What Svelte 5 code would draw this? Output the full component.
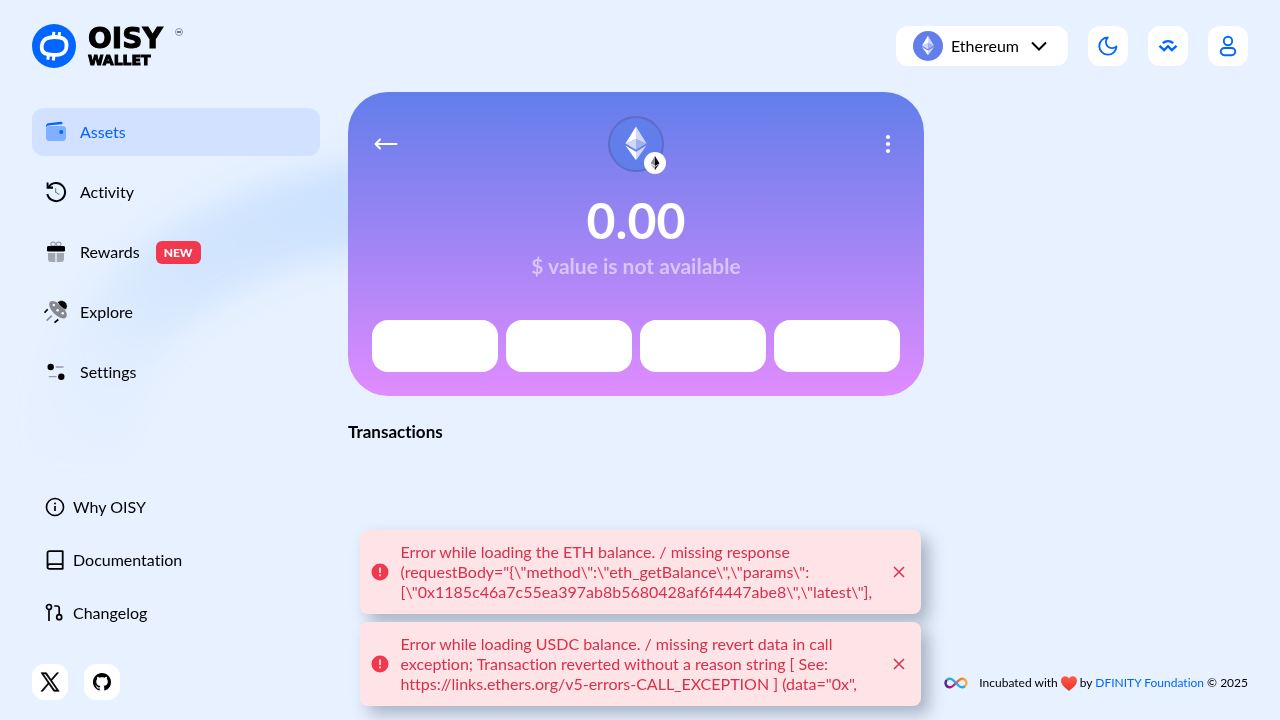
<script lang="ts">
  const nav = [
    { id: 'assets', label: 'Assets' },
    { id: 'activity', label: 'Activity' },
    { id: 'rewards', label: 'Rewards', badge: 'NEW' },
    { id: 'explore', label: 'Explore' },
    { id: 'settings', label: 'Settings' }
  ];

  const links = [
    { id: 'info', label: 'Why OISY' },
    { id: 'docs', label: 'Documentation' },
    { id: 'changelog', label: 'Changelog' }
  ];

  const actions = ['Receive', 'Send', 'Convert', 'Buy'];

  let toasts = $state([
    {
      id: 1,
      text: 'Error while loading the ETH balance. / missing response\n(requestBody="{\\"method\\":\\"eth_getBalance\\",\\"params\\":\n[\\"0x1185c46a7c55ea397ab8b5680428af6f4447abe8\\",\\"latest\\"],'
    },
    {
      id: 2,
      text: 'Error while loading USDC balance. / missing revert data in call\nexception; Transaction reverted without a reason string [ See:\nhttps://links.ethers.org/v5-errors-CALL_EXCEPTION ] (data="0x",'
    }
  ]);

  function dismiss(id: number) {
    toasts = toasts.filter((t) => t.id !== id);
  }
</script>

{#snippet ether()}
  <svg viewBox="-2 -2 37 37" aria-hidden="true">
    <path fill="#fff" fill-opacity=".7" d="M16.5 4v8.9l7.5 3.3z" />
    <path fill="#fff" d="M16.5 4 9 16.2l7.5-3.3z" />
    <path fill="#fff" fill-opacity=".7" d="M16.5 22v6L24 17.6z" />
    <path fill="#fff" d="M16.5 28v-6L9 17.6z" />
    <path fill="#fff" fill-opacity=".4" d="m16.5 20.6 7.5-4.4-7.5-3.3z" />
    <path fill="#fff" fill-opacity=".7" d="m9 16.2 7.5 4.4v-7.7z" />
  </svg>
{/snippet}

{#snippet icon(id: string)}
  <svg class="icon" width="24" height="24" viewBox="0 0 24 24" fill="none" aria-hidden="true">
    {#if id === 'assets'}
      <path fill="#0066ff" d="M2 7.4V6c0-1.500 1-2.600 2.400-2.800l12.300-1.500c.9-.1 1.500.4 1.700 1.200.2.8-.2 1.300-.8 1.400L5.600 5.300C4 5.400 3 6 2 7.400z" />
      <rect x="2" y="6" width="20" height="15" rx="3.400" fill="#80b0ff" />
      <circle cx="17.200" cy="12" r="2" fill="#0066ff" />
    {:else if id === 'activity'}
      <path d="M4.600 7.100A9 9 0 1 1 3.300 14" stroke="#000" stroke-width="2" />
      <path fill="#000" d="M2.600 2.400h1.900v4.200H9v2.100H2.600z" />
      <path d="M11.600 8v4.200l3.800 2.400" stroke="#858a94" stroke-width="1.200" />
    {:else if id === 'rewards'}
      <rect x="6.800" y="2.100" width="4.600" height="4" rx="2" stroke="#989da8" stroke-width="1.100" />
      <rect x="12.400" y="2.100" width="4.600" height="4" rx="2" stroke="#989da8" stroke-width="1.100" />
      <path fill="#a2a8b3" d="M4 13h7.300v9H7.200A3.200 3.200 0 0 1 4 18.800zM12.700 13H20v5.800a3.200 3.200 0 0 1-3.200 3.200h-4.100z" />
      <rect x="3" y="6" width="18" height="5.600" rx="1.400" fill="#000" />
    {:else if id === 'explore'}
      <ellipse cx="14" cy="9.700" rx="11.100" ry="5.500" transform="rotate(45 14 9.700)" fill="#858a92" />
      <path fill="#000" stroke="#e5efff" stroke-width=".6" d="M13.600 2.200c2.800-2.700 6.700-1.700 8.500.9 1.500 2.200 1.400 4.500-.1 6.500-3-.6-6.800-3.800-8.400-7.400z" />
      <g fill="#fff">
        <circle cx="9.800" cy="5" r="1.200" />
        <circle cx="13.600" cy="10.300" r="1.300" />
        <circle cx="18.700" cy="13.200" r="1.200" />
      </g>
      <path d="m.5 12.800 3.200-3.600M10.500 22.600l3.800-3.100" stroke="#000" stroke-width="1.700" />
      <path d="m2.600 20.600 5.200-5" stroke="#858a92" stroke-width="1.500" />
    {:else if id === 'settings'}
      <circle cx="6.700" cy="7" r="3.200" fill="#000" />
      <circle cx="17.300" cy="16.700" r="3.200" fill="#000" />
      <path d="M11.700 7H19.500M4.800 16.700h7.700" stroke="#969ba5" stroke-width="1.300" />
    {:else if id === 'info'}
      <circle cx="12" cy="12" r="8.500" stroke="#000" stroke-width="1.600" />
      <path d="M12 11v5" stroke="#000" stroke-width="1.700" />
      <circle cx="12" cy="8.500" r="1" fill="#000" />
    {:else if id === 'docs'}
      <path d="M4.500 19V5.200c0-1.300.7-2 2-2h13.200v17.600H6.500c-1.300 0-2-.6-2-1.800s.7-2.900 2-2.900h13" stroke="#000" stroke-width="1.800" stroke-linejoin="round" />
    {:else if id === 'changelog'}
      <circle cx="6" cy="6" r="2.500" stroke="#000" stroke-width="1.700" />
      <circle cx="16.200" cy="16.200" r="2.500" stroke="#000" stroke-width="1.700" />
      <path d="M6 8.500v11.500M11.200 5h2.800c1.500 0 2.200.7 2.200 2.200v6.500" stroke="#000" stroke-width="1.700" />
    {/if}
  </svg>
{/snippet}

<svg class="backdrop" viewBox="0 0 1280 720" preserveAspectRatio="xMidYMid slice" aria-hidden="true">
  <defs>
    <filter id="soft" x="-30%" y="-30%" width="160%" height="160%"><feGaussianBlur stdDeviation="15" /></filter>
    <linearGradient id="arc" gradientUnits="userSpaceOnUse" x1="380" y1="190" x2="90" y2="450">
      <stop offset="0" stop-color="#cbe1fe" />
      <stop offset=".55" stop-color="#d4e6fe" />
      <stop offset="1" stop-color="#dfecfe" stop-opacity=".1" />
    </linearGradient>
  </defs>
  <path d="M480 196C300 196 88 262 80 450" fill="none" stroke="url(#arc)" stroke-width="88" filter="url(#soft)" />
</svg>

<div class="page">
  <header>
    <a class="logo" href="#home" aria-label="OISY Wallet">
      <svg width="44" height="44" viewBox="0 0 44 44" aria-hidden="true">
        <circle cx="22" cy="22" r="22" fill="#0066ff" />
        <g stroke="#fff" fill="none">
          <path stroke-width="3.800" d="M16.500 13.800c4.200-1 9-1 13 .1 3.900 1.200 5.400 3.500 5 8.400-.4 4.600-2.200 6.900-6.500 8-4.200.9-8.600.8-12.500-.1-4.400-1-6.200-3.300-5.800-8.100.4-4.900 2.400-7.300 6.800-8.300z" />
          <path stroke-width="3" d="m21.300 13 .6-5.200M26.900 13.500l.7-5.400M16.500 30.500l-.7 5.200M22 31l-.7 5.500" />
        </g>
      </svg>
      <span class="wordmark"><span class="oisy">OISY</span><span class="wallet">WALLET</span></span>
      <svg class="mark" width="8" height="8" viewBox="0 0 8 8" aria-hidden="true">
        <circle cx="4" cy="4" r="3.500" fill="none" stroke="#6c717a" stroke-width=".7" />
        <path d="M2 4h4" stroke="#4a4e55" stroke-width="1.500" />
      </svg>
    </a>
    <div class="tools">
      <button class="network">
        <span class="coin small">{@render ether()}</span>
        Ethereum
        <svg width="24" height="24" viewBox="0 0 24 24" fill="none" aria-hidden="true">
          <path d="m5 8.500 7 7 7-7" stroke="#000" stroke-width="2" />
        </svg>
      </button>
      <button class="tool" aria-label="Dark mode">
        <svg width="24" height="24" viewBox="0 0 24 24" fill="none" aria-hidden="true">
          <path d="M11.700 3.500A8.600 8.600 0 1 0 20.500 12.300 5.900 5.900 0 0 1 11.700 3.500z" stroke="#0066ff" stroke-width="1.800" stroke-linejoin="round" />
        </svg>
      </button>
      <button class="tool" aria-label="WalletConnect">
        <svg width="24" height="24" viewBox="0 0 24 24" fill="none" aria-hidden="true">
          <path d="M6.800 9.100c3.100-2.600 7.300-2.600 10.400 0M3.500 11.800l4.700 4.300 3.800-3.900 3.800 3.900 4.700-4.300" stroke="#0066ff" stroke-width="2.500" />
        </svg>
      </button>
      <button class="tool" aria-label="Account">
        <svg width="24" height="24" viewBox="0 0 24 24" fill="none" stroke="#0066ff" stroke-width="1.900" aria-hidden="true">
          <circle cx="12" cy="7" r="4.200" />
          <rect x="4.700" y="14" width="14.600" height="7.200" rx="3.600" />
        </svg>
      </button>
    </div>
  </header>

  <div class="body">
    <aside>
      <nav class="primary">
        {#each nav as item (item.id)}
          <a href={'#' + item.id} class:active={item.id === 'assets'}>
            {@render icon(item.id)}
            {item.label}
            {#if item.badge}<span class="badge">{item.badge}</span>{/if}
          </a>
        {/each}
      </nav>
      <nav class="secondary">
        {#each links as item (item.id)}
          <a href={'#' + item.id}>{@render icon(item.id)}{item.label}</a>
        {/each}
      </nav>
    </aside>

    <main>
      <section class="hero">
        <div class="top">
          <button class="plain" aria-label="Back">
            <svg width="26" height="24" viewBox="0 0 26 24" fill="none" stroke="#fff" stroke-width="2" stroke-linecap="round" stroke-linejoin="round" aria-hidden="true">
              <path d="M24.500 12h-21M8 7.500 3.500 12 8 16.500" />
            </svg>
          </button>
          <span class="token">
            <span class="coin large">{@render ether()}</span>
            <span class="chain">
              <svg width="14" height="14" viewBox="0 0 14 14" aria-hidden="true">
                <path fill="#8c8f90" d="M7 0 2.600 7.200 7 9.700z" />
                <path fill="#111" d="m7 0 4.400 7.200L7 9.700z" />
                <path fill="#000" d="m7 5.200 4.400 2L7 9.700z" />
                <path fill="#aaa" d="M2.600 8.100 7 14v-3.300z" />
                <path fill="#222" d="M11.400 8.100 7 14v-3.300z" />
              </svg>
            </span>
          </span>
          <button class="plain" aria-label="More options">
            <svg width="26" height="24" viewBox="0 0 26 24" fill="#fff" aria-hidden="true">
              <circle cx="14" cy="5" r="2.100" /><circle cx="14" cy="12" r="2.100" /><circle cx="14" cy="19" r="2.100" />
            </svg>
          </button>
        </div>
        <output class="amount">0.00</output>
        <p class="value">$ value is not available</p>
        <div class="actions">
          {#each actions as action (action)}
            <button aria-label={action}></button>
          {/each}
        </div>
      </section>
      <h2>Transactions</h2>
    </main>
  </div>

  <footer>
    <div class="social">
      <a href="#x" aria-label="X">
        <svg width="20" height="20" viewBox="-1 -1 26 26" aria-hidden="true">
          <path stroke="#000" stroke-width=".9" d="M14.300 10.200 23 0h-2.100l-7.500 8.800L7.400 0H.4l9.100 13.300L.4 24h2.100l8-9.300 6.400 9.300h7zM3.200 1.600h3.200l14.700 20.900h-3.200z" />
        </svg>
      </a>
      <a href="#github" aria-label="GitHub">
        <svg width="18" height="18" viewBox="0 0 16 16" aria-hidden="true">
          <path d="M8 0C3.580 0 0 3.580 0 8c0 3.540 2.290 6.530 5.470 7.590.4.070.55-.17.55-.38 0-.19-.01-.82-.01-1.490-2.010.37-2.530-.49-2.690-.94-.09-.23-.48-.94-.82-1.130-.28-.15-.68-.52-.01-.53.63-.01 1.080.58 1.230.82.72 1.210 1.870.87 2.330.66.07-.52.28-.87.51-1.070-1.780-.2-3.640-.89-3.640-3.950 0-.87.31-1.590.82-2.150-.08-.2-.36-1.020.08-2.120 0 0 .67-.21 2.200.82.64-.18 1.320-.27 2-.27s1.360.09 2 .27c1.530-1.040 2.200-.82 2.200-.82.44 1.100.16 1.920.08 2.120.51.56.82 1.270.82 2.150 0 3.070-1.870 3.750-3.650 3.950.29.25.54.73.54 1.480 0 1.070-.01 1.930-.01 2.200 0 .21.15.46.55.38A8.010 8.010 0 0 0 16 8c0-4.420-3.580-8-8-8z" />
        </svg>
      </a>
    </div>
    <p class="credit">
      <svg width="24" height="12" viewBox="0 0 24 12" fill="none" stroke-width="2.400" aria-hidden="true">
        <defs>
          <linearGradient id="ica" x1="0" x2="1"><stop offset="0" stop-color="#522785" /><stop offset="1" stop-color="#ed1e79" /></linearGradient>
          <linearGradient id="icb" x1="0" x2="1"><stop offset="0" stop-color="#f15a24" /><stop offset="1" stop-color="#fbb03b" /></linearGradient>
        </defs>
        <path stroke="url(#icb)" d="M12 6c2-2.200 4-4.300 6.200-4.300A4.300 4.300 0 0 1 21 9.200" />
        <path stroke="url(#ica)" d="M3 2.800A4.300 4.300 0 0 0 5.800 10.300C8 10.300 10 8.200 12 6" />
        <path stroke="#29abe2" d="M3 2.800c3.500-2.700 6.300.2 9 3.200s5.500 5.900 9 3.200" />
      </svg>
      <span>Incubated with</span>
      <svg width="16" height="15" viewBox="0 0 16 15" aria-hidden="true">
        <defs><linearGradient id="heart" x2="0" y2="1"><stop offset="0" stop-color="#ff5a4a" /><stop offset="1" stop-color="#e93228" /></linearGradient></defs>
        <path fill="url(#heart)" d="M8 15C5.500 12.800 0 9.400 0 4.500 0 .2 5.700-1.500 8 2.500c2.300-4 8-2.300 8 2C16 9.400 10.500 12.800 8 15z" />
      </svg>
      <span>by <a href="#dfinity">DFINITY Foundation</a> © 2025</span>
    </p>
  </footer>
</div>

<div class="toasts">
  {#each toasts as toast (toast.id)}
    <div class="toast" role="alert">
      <svg width="20" height="20" viewBox="0 0 20 20" aria-hidden="true">
        <circle cx="10" cy="10" r="8.500" fill="#f0384e" />
        <path d="M10 5.500v5.500M10 12.500v1.700" stroke="#ffe4e7" stroke-width="1.800" />
      </svg>
      <p>{toast.text}</p>
      <button class="plain" aria-label="Close" onclick={() => dismiss(toast.id)}>
        <svg width="20" height="20" viewBox="0 0 20 20" aria-hidden="true">
          <path d="m5 5 10 10M15 5 5 15" stroke="#d9304a" stroke-width="1.500" />
        </svg>
      </button>
    </div>
  {/each}
</div>

<style>
  :global(body) {
    background: #e7f1ff;
    color: #000;
    font: 16px/24px Lato, "Liberation Sans", sans-serif;
    font-variant-ligatures: none;
  }
  * { box-sizing: border-box; }
  a { color: inherit; text-decoration: none; }
  p, h2 { margin: 0; }
  button { font: inherit; color: inherit; border: 0; padding: 0; cursor: pointer; }
  svg { display: block; flex: none; }

  .backdrop { position: fixed; inset: 0; width: 100%; height: 100%; z-index: -1; }
  .page { min-height: 100vh; display: flex; flex-direction: column; }

  header { display: flex; justify-content: space-between; align-items: center; height: 92px; padding: 0 32px; }
  .logo { display: flex; align-items: center; }
  .wordmark { display: flex; flex-direction: column; margin-left: 12px; font-family: "DejaVu Sans", sans-serif; font-weight: 700; -webkit-text-stroke: 1px #000; }
  .oisy { font-size: 28px; line-height: 28px; }
  .wallet { font-size: 14px; line-height: 14px; }
  .mark { align-self: flex-start; margin-top: 4px; margin-left: 12px; }

  .tools { display: flex; gap: 20px; }
  .tools button { display: flex; align-items: center; height: 40px; border-radius: 12px; background: #fff; }
  .tools .network { padding: 0 17px; gap: 8px; }
  .tools .tool { width: 40px; justify-content: center; }
  .coin { display: block; border-radius: 50%; background: #627eea; }
  .coin :global(svg) { width: 100%; height: 100%; }
  .small { width: 30px; height: 30px; }

  .body { flex: 1; display: flex; gap: 28px; padding: 0 32px; }
  aside { flex: 0 0 288px; display: flex; flex-direction: column; justify-content: space-between; padding-top: 16px; }
  .primary { display: flex; flex-direction: column; gap: 12px; }
  .primary a { display: flex; align-items: center; gap: 12px; height: 48px; padding: 0 12px; border-radius: 12px; }
  .primary .active { background: #d1e1ff; color: #0066ff; }
  .badge { margin-left: 4px; padding: 0 8px; border-radius: 6px; background: #f0384e; color: #fff; font-size: 12px; font-weight: 900; line-height: 23px; }
  .secondary { display: flex; flex-direction: column; gap: 29px; padding: 0 11px 39px; }
  .secondary a { display: flex; align-items: center; gap: 6px; }

  main { flex: 0 1 576px; min-width: 0; }
  .hero { display: flex; flex-direction: column; align-items: center; padding: 24px; border-radius: 40px; background: linear-gradient(#627eea, #e08cff); color: #fff; }
  .top { display: flex; align-items: center; justify-content: space-between; width: 100%; }
  .plain { background: none; }
  .token { position: relative; }
  .large { width: 56px; height: 56px; border: 2px solid #5f6bcb; }
  .chain { position: absolute; right: -2px; bottom: -2px; width: 22px; height: 22px; border-radius: 50%; background: #fff; display: grid; place-items: center; }
  .amount { margin-top: 18px; font-size: 50px; line-height: 60px; font-weight: 700; }
  .value { margin-top: 2px; font-size: 21px; line-height: 28px; font-weight: 700; color: #d9c5fb; }
  .actions { display: grid; grid-template-columns: repeat(4, 1fr); gap: 8px; width: 100%; margin-top: 40px; }
  .actions button { height: 52px; border-radius: 16px; background: #fff; }
  h2 { margin-top: 24px; font-size: 17px; line-height: 24px; font-weight: 700; }

  footer { display: flex; align-items: center; justify-content: space-between; padding: 0 32px 20px; }
  .social { display: flex; gap: 16px; }
  .social a { display: grid; place-items: center; width: 36px; height: 36px; border-radius: 12px; background: #fff; }
  .credit { display: flex; align-items: center; padding-top: 2px; font-size: 12px; line-height: 20px; gap: 3px; }
  .credit > svg:first-child { margin-right: 8px; }
  .credit a { color: #0066ff; }

  .toasts { position: fixed; left: 0; right: 0; bottom: 14px; margin: 0 auto; width: calc(100% - 32px); max-width: 561px; display: flex; flex-direction: column; gap: 8px; }
  .toast { display: flex; align-items: center; gap: 11px; padding: 12px 12px 12px 10px; border-radius: 8px; background: #ffe4e7; color: #d9304a; box-shadow: 8px 8px 16px rgb(60 70 90 / 36%); }
  .toast p { flex: 1; min-width: 0; line-height: 20px; white-space: pre-line; overflow-wrap: anywhere; }
</style>
